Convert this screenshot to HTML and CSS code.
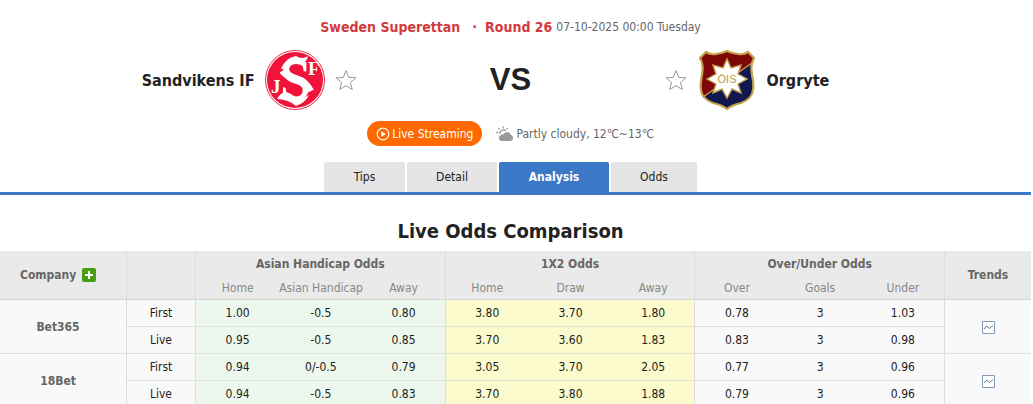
FILE: index.html
```html
<!DOCTYPE html>
<html lang="en">

<head>
  <meta charset="UTF-8">
  <title>Sandvikens IF VS Orgryte</title>
  <link rel="stylesheet" href="styles.css">
</head>

<body>
  <header class="match">
    <div class="match-info">
      <a class="league" href="#">Sweden Superettan</a>
      <span class="dot">·</span>
      <span class="round">Round 26</span>
      <time datetime="2025-10-07T00:00">07-10-2025 00:00 Tuesday</time>
    </div>

    <div class="teams">
      <div class="team home">
        <a class="team-name" href="#">Sandvikens IF</a>
        <svg class="logo" viewBox="0 0 60 60" aria-hidden="true">
          <circle cx="30" cy="30" r="29.5" fill="#fff" stroke="#e8294a" stroke-width="1"/>
          <circle cx="30" cy="30" r="28" fill="#f0143a"/>
          <path d="M12 49 Q16 42 21 42 Q25 43 29 46 Q36 50 44 45 Q40 53 31 56 Q25 50 12 49Z" fill="#fff"/>
          <path d="M16 19 Q20 8 31 6 Q37 10 43 6 Q42 13 34 14 Q27 12 24 18Z" fill="#fff"/>
          <path d="M17 21 Q22 28 33 29 Q42 32 46 41" fill="none" stroke="#fff" stroke-width="6"/>
          <text class="logo-letters"><tspan class="small" x="6" y="43">J</tspan><tspan class="big" x="15" y="49">S</tspan><tspan class="small" x="43" y="25">F</tspan></text>
        </svg>
        <button class="star" type="button" aria-label="Follow Sandvikens IF">
          <svg viewBox="0 0 22 22"><path d="M11 1.5 13.7 8.4 21 8.8 15.4 13.5 17.3 20.5 11 16.7 4.7 20.5 6.6 13.5 1 8.8 8.3 8.4Z"/></svg>
        </button>
      </div>
      <div class="vs">VS</div>
      <div class="team away">
        <button class="star" type="button" aria-label="Follow Orgryte">
          <svg viewBox="0 0 22 22"><path d="M11 1.5 13.7 8.4 21 8.8 15.4 13.5 17.3 20.5 11 16.7 4.7 20.5 6.6 13.5 1 8.8 8.3 8.4Z"/></svg>
        </button>
        <svg class="logo" viewBox="0 0 60 60" aria-hidden="true">
          <path d="M9 2 Q13 5 19 4 Q26 3 30 1 Q34 3 41 4 Q47 5 51 2 L57 8 Q53 15 55 25 Q57 34 56 40 Q55 49 44 53 Q35 55 30 59 Q25 55 16 53 Q5 49 4 40 Q3 34 5 25 Q7 15 3 8Z" fill="#10184f"/>
          <path d="M9 2 Q13 5 19 4 Q26 3 30 1 Q34 3 41 4 Q47 5 51 2 L57 8 Q55 11 54 14 L6 47 Q3 41 4 34 Q7 16 3 8Z" fill="#7e0808"/>
          <path d="M55 13 L6 47" stroke="#c5a14b" stroke-width="1.5"/>
          <path d="M9 2 Q13 5 19 4 Q26 3 30 1 Q34 3 41 4 Q47 5 51 2 L57 8 Q53 15 55 25 Q57 34 56 40 Q55 49 44 53 Q35 55 30 59 Q25 55 16 53 Q5 49 4 40 Q3 34 5 25 Q7 15 3 8Z" fill="none" stroke="#c5a14b" stroke-width="2.2"/>
          <path d="M30 9 34 18 44 15 41 24 50 29 41 34 44 43 35 39 30 48 25 39 16 43 19 34 10 29 19 24 16 15 26 18Z" fill="#fff" stroke="#c5a14b" stroke-width="1.4"/>
          <text class="logo-ois" x="30" y="33" text-anchor="middle">ÖIS</text>
        </svg>
        <a class="team-name" href="#">Orgryte</a>
      </div>
    </div>

    <div class="match-extra">
      <a class="live-btn" href="#">
        <svg viewBox="0 0 14 14" aria-hidden="true"><circle cx="7" cy="7" r="5.8" fill="none" stroke="#fff" stroke-width="1.2"/><path d="M5.4 4.2 10 7 5.4 9.8Z" fill="#fff"/></svg>
        Live Streaming
      </a>
      <span class="weather">
        <svg viewBox="0 0 18 16" aria-hidden="true">
          <path d="M3.5 8 A4 4 0 0 1 10 4.8" fill="none" stroke="#999" stroke-width="1.4"/>
          <path d="M7.2 0.5V2.5M2.5 2 3.7 3.4M0.3 6.5H2M11.8 2 10.7 3.3" stroke="#999" stroke-width="1.3"/>
          <path d="M5 15 A3.2 3.2 0 0 1 4.8 9 A3 3 0 0 1 7.5 8.2 A4.2 4.2 0 0 1 15 9 A3.1 3.1 0 0 1 14.4 15Z" fill="#999"/>
        </svg>
        Partly cloudy, 12℃~13℃
      </span>
    </div>
  </header>

  <nav class="tabs">
    <a class="tab tips" href="#">Tips</a>
    <a class="tab detail" href="#">Detail</a>
    <a class="tab analysis active" href="#">Analysis</a>
    <a class="tab odds" href="#">Odds</a>
  </nav>

  <h2 class="title">Live Odds Comparison</h2>

  <table class="odds-table">
    <colgroup>
      <col class="col-company">
      <col class="col-type">
      <col span="9" class="col-odds">
      <col class="col-trends">
    </colgroup>
    <thead>
      <tr class="head-top">
        <th rowspan="2" class="company line">Company <button class="add" type="button" aria-label="Add company"></button></th>
        <th rowspan="2" class="line"></th>
        <th colspan="3" class="line">Asian Handicap Odds</th>
        <th colspan="3" class="line">1X2 Odds</th>
        <th colspan="3" class="line">Over/Under Odds</th>
        <th rowspan="2">Trends</th>
      </tr>
      <tr class="head-sub">
        <th>Home</th>
        <th>Asian Handicap</th>
        <th class="line">Away</th>
        <th>Home</th>
        <th>Draw</th>
        <th class="line">Away</th>
        <th>Over</th>
        <th>Goals</th>
        <th class="line">Under</th>
      </tr>
    </thead>
    <tbody>
      <tr>
        <th rowspan="2" class="company line">Bet365</th>
        <td class="line">First</td>
        <td class="ah">1.00</td>
        <td class="ah">-0.5</td>
        <td class="ah line">0.80</td>
        <td class="hda">3.80</td>
        <td class="hda">3.70</td>
        <td class="hda line">1.80</td>
        <td>0.78</td>
        <td>3</td>
        <td class="line">1.03</td>
        <td rowspan="2">
          <button class="trend" type="button" aria-label="Bet365 trends"><svg viewBox="0 0 13 13"><path d="M0.5 0.5H12.5V12.5H0.5Z" fill="#fff" stroke="#8598b8"/><path d="M2 8 4.8 5 7.5 7.5 11 4.5" fill="none" stroke="#777"/></svg></button>
        </td>
      </tr>
      <tr>
        <td class="line">Live</td>
        <td class="ah">0.95</td>
        <td class="ah">-0.5</td>
        <td class="ah line">0.85</td>
        <td class="hda">3.70</td>
        <td class="hda">3.60</td>
        <td class="hda line">1.83</td>
        <td>0.83</td>
        <td>3</td>
        <td class="line">0.98</td>
      </tr>
      <tr>
        <th rowspan="2" class="company line">18Bet</th>
        <td class="line">First</td>
        <td class="ah">0.94</td>
        <td class="ah">0/-0.5</td>
        <td class="ah line">0.79</td>
        <td class="hda">3.05</td>
        <td class="hda">3.70</td>
        <td class="hda line">2.05</td>
        <td>0.77</td>
        <td>3</td>
        <td class="line">0.96</td>
        <td rowspan="2">
          <button class="trend" type="button" aria-label="18Bet trends"><svg viewBox="0 0 13 13"><path d="M0.5 0.5H12.5V12.5H0.5Z" fill="#fff" stroke="#8598b8"/><path d="M2 8 4.8 5 7.5 7.5 11 4.5" fill="none" stroke="#777"/></svg></button>
        </td>
      </tr>
      <tr>
        <td class="line">Live</td>
        <td class="ah">0.94</td>
        <td class="ah">-0.5</td>
        <td class="ah line">0.83</td>
        <td class="hda">3.70</td>
        <td class="hda">3.80</td>
        <td class="hda line">1.88</td>
        <td>0.79</td>
        <td>3</td>
        <td class="line">0.96</td>
      </tr>
    </tbody>
  </table>
</body>
</html>
```
FILE: styles.css
```css
body {
  margin: 0 2px 0 0;
  background: #fff;
  color: #222;
  font-family: Tahoma, "DejaVu Sans Condensed", "Noto Sans", "Noto Sans CJK SC", sans-serif;
  font-size: 12px;
  overflow: hidden;
}

a {
  color: inherit;
  text-decoration: none;
}

button {
  padding: 0;
  border: 0;
  background: none;
  cursor: pointer;
}

svg {
  display: block;
}

.match {
  padding: 17px 10px 0 0;
}

.match-info {
  display: flex;
  justify-content: center;
  align-items: center;
  gap: 4px;
  height: 20px;
  color: #666;
}

.league,
.dot,
.round {
  color: #d4393c;
  font-size: 14px;
  font-weight: bold;
}

.dot {
  margin: 0 4px 0 8px;
}

.teams {
  display: grid;
  grid-template-columns: 1fr 308px 1fr;
  align-items: center;
  margin-top: 13px;
}

.team {
  display: flex;
  align-items: center;
  gap: 10px;
}

.home {
  justify-content: flex-end;
}

.team-name {
  font-size: 16px;
  font-weight: bold;
}

.logo {
  width: 60px;
  height: 60px;
  overflow: visible;
}

.logo-letters {
  fill: #fff;
  font-family: "Liberation Serif", serif;
  font-weight: bold;
}

.logo-letters .big {
  font-size: 56px;
}

.logo-letters .small {
  font-size: 19px;
}

.logo-ois {
  fill: #b99a45;
  font-family: "Liberation Sans", sans-serif;
  font-size: 11px;
}

.star {
  width: 22px;
  height: 22px;
}

.star path {
  fill: #fff;
  stroke: #999;
  stroke-width: 1;
}

.vs {
  text-align: center;
  font-family: "Liberation Sans", Arial, sans-serif;
  font-size: 31px;
  font-weight: bold;
}

.match-extra {
  display: flex;
  justify-content: center;
  align-items: center;
  gap: 14px;
  margin-top: 11px;
  color: #666;
}

.live-btn {
  display: flex;
  align-items: center;
  gap: 2px;
  height: 25px;
  padding: 0 9px;
  border-radius: 13px;
  background: #ff6900;
  color: #fff;
}

.live-btn svg {
  width: 14px;
  height: 14px;
}

.weather {
  display: flex;
  align-items: center;
  gap: 2px;
}

.weather svg {
  width: 18px;
  height: 16px;
}

.tabs {
  display: flex;
  justify-content: center;
  gap: 2px;
  margin-top: 16px;
  padding-right: 10px;
  border-bottom: 3px solid #3c78c8;
}

.tab {
  box-sizing: border-box;
  height: 30px;
  border-radius: 2px 2px 0 0;
  background: #e5e5e5;
  line-height: 30px;
  text-align: center;
}

.tips {
  width: 81px;
}

.detail {
  width: 90px;
}

.analysis {
  width: 110px;
}

.odds {
  width: 86px;
}

.tab.active {
  background: #3c78c8;
  color: #fff;
  font-weight: bold;
}

.title {
  margin: 24px 10px 7px 0;
  font-size: 20px;
  line-height: 25px;
  text-align: center;
}

.odds-table {
  width: 100%;
  border-collapse: separate;
  border-spacing: 0;
  table-layout: fixed;
  text-align: center;
}

.col-company {
  width: 127px;
}

.col-type {
  width: 69px;
}

.col-trends {
  width: 86px;
}

.odds-table th,
.odds-table td {
  box-sizing: border-box;
  height: 27px;
  padding: 0;
  border-bottom: 1px solid #e0e0e0;
  background: #f9f9f9;
}

.odds-table th {
  color: #666;
}

.odds-table .company {
  padding-right: 10px;
}

.odds-table .line {
  border-right: 1px solid #ddd;
}

.odds-table thead th {
  height: 24px;
  border-bottom-color: #d5d5d5;
  background: #eaeaea;
}

.odds-table .head-top th[colspan] {
  border-bottom: 0;
}

.odds-table .head-top th {
  height: 25px;
}

.odds-table .head-sub th {
  color: #888;
  font-weight: normal;
  white-space: nowrap;
}

.odds-table .ah {
  background: #ecf8ed;
}

.odds-table .hda {
  background: #fbfbcd;
}

.add {
  width: 14px;
  height: 14px;
  margin-left: 2px;
  border-radius: 2px;
  background:
    linear-gradient(#fff, #fff) center / 8px 2px no-repeat,
    linear-gradient(#fff, #fff) center / 2px 8px no-repeat,
    #47a012;
  vertical-align: middle;
}

.trend {
  width: 13px;
  height: 13px;
  vertical-align: middle;
}
```
